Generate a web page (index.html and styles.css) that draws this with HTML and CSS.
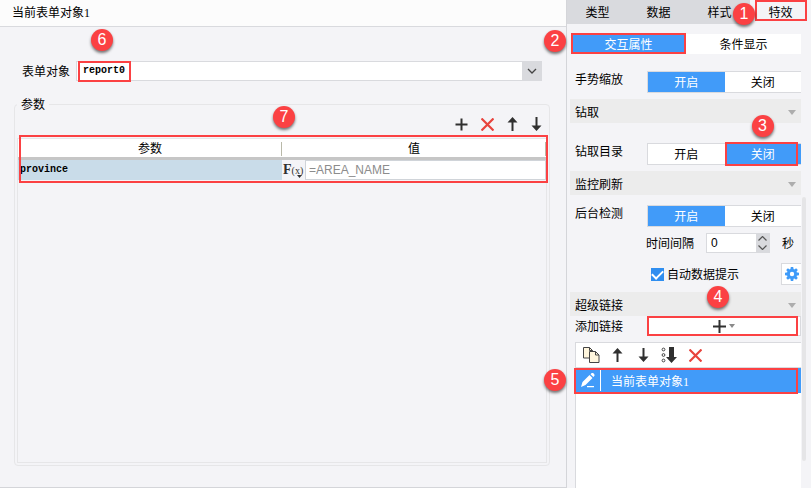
FILE: index.html
```html
<!DOCTYPE html>
<html lang="zh-CN">
<head>
<meta charset="utf-8">
<title>当前表单对象1</title>
<link rel="stylesheet" href="styles.css">
</head>
<body>
<main class="editor">
  <h1 class="title">当前表单对象<span class="num">1</span></h1>
  <div class="editor-body">
    <div class="form-row">
      <label for="target">表单对象</label>
      <div class="combo">
        <select id="target"><option>report0</option></select>
        <span class="combo-arrow"><svg width="10" height="6" viewBox="0 0 10 6"><path d="M1 1l4 4 4-4" fill="none" stroke="#444" stroke-width="1.3"/></svg></span>
        <span class="mark mark-target"><b class="badge badge-6">6</b></span>
      </div>
    </div>
    <fieldset class="params">
      <legend>参数</legend>
      <div class="toolbar">
        <button type="button" aria-label="添加"><svg width="13" height="13" viewBox="0 0 13 13"><path d="M6.5 .5v12M.5 6.5h12" stroke="#303030" stroke-width="2"/></svg></button>
        <button type="button" aria-label="删除"><svg width="13" height="13" viewBox="0 0 13 13"><path d="M.5 .5l12 12M12.500 .5l-12 12" stroke="#e8433c" stroke-width="2.200"/></svg></button>
        <button type="button" aria-label="上移"><svg width="11" height="14" viewBox="0 0 11 14"><path d="M5.500 0L10.500 5.500H6.500V14h-2V5.500H.5z" fill="#303030"/></svg></button>
        <button type="button" aria-label="下移"><svg width="11" height="14" viewBox="0 0 11 14"><path d="M5.500 14L10.500 8.500H6.500V0h-2v8.500H.5z" fill="#303030"/></svg></button>
      </div>
      <div class="grid-box">
        <table>
          <thead><tr><th>参数</th><th>值</th></tr></thead>
          <tbody><tr>
            <td class="name">province</td>
            <td><div class="value">
              <button type="button" class="fx" aria-label="公式"><span class="fx-f">F</span><span class="fx-x">(x)</span><svg width="5" height="3" viewBox="0 0 5 3"><path d="M0 0h5L2.500 3z" fill="#303030"/></svg></button>
              <input type="text" aria-label="值" value="=AREA_NAME">
            </div></td>
          </tr></tbody>
        </table>
        <span class="mark mark-table"><b class="badge badge-7">7</b></span>
      </div>
    </fieldset>
  </div>
</main>

<aside class="side">
  <nav class="tabs">
    <button type="button">类型</button>
    <button type="button">数据</button>
    <button type="button">样式</button>
    <button type="button" class="active">特效<span class="mark mark-tab"><b class="badge badge-1">1</b></span></button>
  </nav>
  <div class="panel">
    <div class="subtabs">
      <button type="button" class="on">交互属性<span class="mark mark-sub"><b class="badge badge-2">2</b></span></button>
      <button type="button">条件显示</button>
    </div>
    <div class="row">
      <span class="row-label">手势缩放</span>
      <div class="toggle"><button type="button" class="on">开启</button><button type="button">关闭</button></div>
    </div>
    <h2 class="section">钻取</h2>
    <div class="row row-drill">
      <span class="row-label">钻取目录</span>
      <div class="toggle"><button type="button">开启</button><button type="button" class="on">关闭<span class="mark mark-off"><b class="badge badge-3">3</b></span></button></div>
    </div>
    <h2 class="section">监控刷新</h2>
    <div class="row row-check">
      <span class="row-label">后台检测</span>
      <div class="toggle"><button type="button" class="on">开启</button><button type="button">关闭</button></div>
    </div>
    <div class="interval">
      <label for="secs">时间间隔</label>
      <div class="spinner">
        <input id="secs" type="text" inputmode="numeric" value="0">
        <div class="steps">
          <button type="button" aria-label="增加"><svg width="9" height="5" viewBox="0 0 9 5"><path d="M.5 4.500l4-4 4 4" fill="none" stroke="#555" stroke-width="1.200"/></svg></button>
          <button type="button" aria-label="减少"><svg width="9" height="5" viewBox="0 0 9 5"><path d="M.5 .5l4 4 4-4" fill="none" stroke="#555" stroke-width="1.200"/></svg></button>
        </div>
      </div>
      <span>秒</span>
    </div>
    <div class="tip">
      <input id="auto" type="checkbox" checked>
      <label for="auto">自动数据提示</label>
      <button type="button" class="gear" aria-label="设置"><svg width="14" height="14" viewBox="-7 -7 14 14"><g fill="#3e9bf9"><circle r="5"/><path id="tooth" d="M-1.700-4L-1.200-7h2.400L1.700-4V4L1.200 7h-2.400L-1.700 4z"/><use href="#tooth" transform="rotate(45)"/><use href="#tooth" transform="rotate(90)"/><use href="#tooth" transform="rotate(135)"/></g><circle r="2.200" fill="#fff"/></svg></button>
    </div>
    <h2 class="section">超级链接</h2>
    <div class="row row-link">
      <span class="row-label">添加链接</span>
      <button type="button" class="add" aria-label="添加链接">
        <svg width="13" height="13" viewBox="0 0 13 13"><path d="M6.500 0v13M0 6.500h13" stroke="#303030" stroke-width="2"/></svg>
        <svg width="6" height="4" viewBox="0 0 6 4"><path d="M0 0h6L3 4z" fill="#8a8a8a"/></svg>
        <span class="mark mark-add"><b class="badge badge-4">4</b></span>
      </button>
    </div>
    <div class="links">
      <div class="link-tools">
        <button type="button" aria-label="复制"><svg width="17" height="16" viewBox="0 0 17 16"><g fill="#fff6dd" stroke="#444"><path d="M.5 .5h6l3 3v7.500h-9z"/><path d="M6.500 .5v3h3" fill="none"/><path d="M6.500 4.500h6l3.500 3.500v7.500H6.500z"/><path d="M12.500 4.500V8H16" fill="none"/></g></svg></button>
        <button type="button" aria-label="上移"><svg width="11" height="14" viewBox="0 0 11 14"><path d="M5.500 0L10.500 5.500H6.500V14h-2V5.500H.5z" fill="#303030"/></svg></button>
        <button type="button" aria-label="下移"><svg width="11" height="14" viewBox="0 0 11 14"><path d="M5.500 14L10.500 8.500H6.500V0h-2v8.500H.5z" fill="#303030"/></svg></button>
        <button type="button" aria-label="排序"><svg width="16" height="16" viewBox="0 0 16 16"><g fill="none" stroke="#444"><circle cx="2.500" cy="2.500" r="1.400"/><circle cx="2.500" cy="8" r="1.400"/><circle cx="2.500" cy="13.500" r="1.400"/></g><path d="M8 0h5v10h3l-5.500 6L5 10h3z" fill="#303030"/></svg></button>
        <button type="button" aria-label="删除"><svg width="13" height="13" viewBox="0 0 13 13"><path d="M.5 .5l12 12M12.500 .5l-12 12" stroke="#e8433c" stroke-width="2.200"/></svg></button>
      </div>
      <div class="link-item">
        <button type="button" class="edit" aria-label="编辑"><svg width="14" height="15" viewBox="0 0 14 15"><path d="M0 14l1.500-5L8.500 2l3 3L4.500 12zM9.500 1.200L10.700 0q1-.4 2 .6t.8 2.200L12.400 4zM6 13h7v1.200H6z" fill="#fff"/></svg></button>
        <span class="link-name">当前表单对象<span class="num">1</span></span>
        <span class="mark mark-item"><b class="badge badge-5">5</b></span>
      </div>
    </div>
    <div class="scrollbar"></div>
  </div>
</aside>
</body>
</html>
```

FILE: styles.css
```css
* { box-sizing: border-box; }

body {
  margin: 0;
  display: flex;
  height: 100vh;
  overflow: hidden;
  background: #f4f4f7;
  color: #000;
  font: 12px/16px "Noto Sans CJK SC", sans-serif;
}

button, input, select {
  margin: 0;
  padding: 0;
  border: 0;
  border-radius: 0;
  background: none;
  color: inherit;
  font: inherit;
}

svg { display: block; flex: none; }

.num { font: 12px/12px "Liberation Serif", serif; }

/* Left editor */
.editor {
  flex: 1;
  min-width: 0;
  display: flex;
  flex-direction: column;
  border-right: 1px solid #d4d5d9;
  border-bottom: 1px solid #d4d5d9;
}

.title {
  margin: 0;
  padding: 4px 12px 6px;
  border-bottom: 1px solid #d9dade;
  background: #fcfcfc;
  font-size: 12px;
  font-weight: 400;
}

.editor-body {
  flex: 1;
  display: flex;
  flex-direction: column;
  padding: 34px 16px 21px 14px;
}

.form-row {
  display: flex;
  align-items: center;
  gap: 6px;
  padding: 0 8px;
}

.combo {
  position: relative;
  flex: 1;
  display: flex;
  height: 20px;
  border: 1px solid #d9dade;
  background: #fff;
}

.combo select {
  flex: 1;
  appearance: none;
  padding-left: 6px;
  font: bold 10px/18px "Liberation Mono", monospace;
}

.combo-arrow {
  display: grid;
  place-items: center;
  width: 19px;
  background: #d9dade;
}

.params {
  flex: 1;
  display: flex;
  flex-direction: column;
  min-width: 0;
  margin: 15px 0 0;
  padding: 0 2px 2px;
  border: 1px solid #e6e6e8;
  border-radius: 4px;
}

.params legend { padding: 0 4px; }

.toolbar {
  display: flex;
  justify-content: flex-end;
  align-items: center;
  gap: 13px;
  height: 26px;
  padding: 0 5px 2px 0;
}

.grid-box {
  position: relative;
  flex: 1;
  border: 1px solid #e6e6e8;
}

table {
  width: 100%;
  border-collapse: separate;
  border-spacing: 0;
  table-layout: fixed;
}

th {
  height: 21px;
  padding: 0;
  border-bottom: 3px solid #c6c6c6;
  background: linear-gradient(#b9b9a9, #b9b9a9) right 3px / 1px 14px no-repeat, #fff;
  font-weight: 400;
  line-height: 18px;
}

td { padding: 0; height: 20px; }

.name {
  padding-left: 2px;
  background: #c9dce9;
  font: bold 10px/18px "Liberation Mono", monospace;
}

.value { display: flex; height: 20px; }

.fx {
  position: relative;
  width: 23px;
  padding-left: 1px;
  font-family: "Liberation Serif", serif;
  text-align: left;
  line-height: 16px;
  white-space: nowrap;
  color: #303030;
}

.fx-f { font-size: 14px; font-weight: 700; }
.fx-x { font-size: 10px; }
.fx svg { position: absolute; right: 3px; bottom: 2px; }

.value input {
  flex: 1;
  min-width: 0;
  padding-left: 3px;
  border: 1px solid #d0d4d9;
  background: #fff;
  color: #8c8c8c;
  font: 12px "Liberation Sans", sans-serif;
}

/* Right property panel */
.side {
  flex: none;
  width: 244px;
  display: flex;
  flex-direction: column;
}

.tabs { display: flex; height: 24px; background: #d9dade; }
.tabs button { position: relative; flex: 1; }
.tabs .active { background: #f4f4f7; }

.panel {
  position: relative;
  flex: 1;
  display: flex;
  flex-direction: column;
  padding: 10px 10px 0 3px;
}

.subtabs {
  display: flex;
  height: 20px;
  margin: 0 0 17px 1px;
  background: #fff;
}

.subtabs button { position: relative; flex: 1; }

.on { background: #419bf9; color: #fff; }

.row {
  display: flex;
  align-items: flex-start;
  justify-content: space-between;
  height: 28px;
  padding-left: 5px;
}

.row-label { white-space: nowrap; }

.row-drill { height: 48px; padding-top: 20px; }
.row-check { height: 38px; padding-top: 10px; }
.row-link { height: 26px; }
.row-link .row-label { padding-top: 2px; }

.toggle {
  display: flex;
  width: 154px;
  height: 22px;
  border: 1px solid #d9dade;
  border-right: 0;
  background: #fff;
}

.toggle button { position: relative; flex: 1; }

.section {
  display: flex;
  align-items: center;
  justify-content: space-between;
  height: 24px;
  margin: 0;
  padding: 2px 5px 0;
  background: #ececec;
  font-size: 12px;
  font-weight: 400;
}

.section::after {
  content: "";
  border: 4px solid transparent;
  border-top: 5px solid #adadad;
  border-bottom: 0;
}

.interval {
  display: flex;
  align-items: center;
  gap: 12px;
  padding-left: 76px;
}

.spinner {
  display: flex;
  width: 64px;
  height: 20px;
  border: 1px solid #d9dade;
  background: #fff;
}

.spinner input {
  flex: 1;
  min-width: 0;
  padding-left: 4px;
  font-family: "Liberation Sans", sans-serif;
}

.steps {
  display: flex;
  flex-direction: column;
  width: 13px;
  background: #d9dade;
}

.steps button { flex: 1; display: grid; place-items: center; }

.tip {
  display: flex;
  align-items: center;
  gap: 3px;
  margin: 10px 0 7px;
  padding-left: 81px;
}

.tip input {
  appearance: none;
  width: 13px;
  height: 13px;
  background: #2f8ef0;
  display: grid;
  place-items: center;
}

.tip input::after {
  content: "";
  width: 5px;
  height: 9px;
  margin-bottom: 2px;
  border: solid #fff;
  border-width: 0 2px 2px 0;
  transform: rotate(45deg);
}

.tip input:not(:checked)::after { display: none; }

.gear {
  display: grid;
  place-items: center;
  width: 20px;
  height: 22px;
  margin-left: auto;
  border: 1px solid #d9dade;
  border-right: 0;
  background: #fff;
}

.add {
  position: relative;
  display: flex;
  align-items: center;
  justify-content: center;
  gap: 3px;
  width: 154px;
  height: 20px;
  border: 1px solid #d9dade;
  background: #fff;
}

.links {
  flex: 1;
  margin-left: 5px;
  border: 1px solid #d9dade;
  border-width: 1px 0 0 1px;
  background: #fff;
}

.link-tools {
  display: flex;
  align-items: center;
  gap: 15px;
  height: 25px;
  padding-left: 7px;
  border-bottom: 1px solid #d9dade;
}

.link-tools button:first-child { margin-right: -3px; }
.link-tools button:nth-child(4) { margin: 0 -3px; }

.link-item {
  position: relative;
  display: flex;
  align-items: center;
  height: 25px;
  background: #419bf9;
  color: #fff;
}

.edit { width: 25px; height: 21px; padding-left: 5px; border-right: 1px solid #fff; }
.link-name { padding-left: 10px; }

.scrollbar {
  position: absolute;
  top: 173px;
  right: 5px;
  bottom: 27px;
  width: 4px;
  border-radius: 2px;
  background: #e5e5e7;
}

/* Numbered callouts */
.mark { position: absolute; border: 2px solid #fb4143; pointer-events: none; z-index: 1; }

.mark-target { left: 1px; top: -1px; width: 53px; height: 21px; }
.mark-table { left: 1px; right: -2px; top: -4px; height: 48px; }
.mark-tab { left: 5px; right: 4px; top: 0; height: 21px; }
.mark-sub { inset: -1px 0 0; }
.mark-off { inset: -2px 3px -2px 0; }
.mark-add { inset: -1px 2px -1px -1px; }
.mark-item { inset: 0 3px -1px -2px; }

.badge {
  position: absolute;
  width: 22px;
  height: 22px;
  border-radius: 50%;
  background: #fb4143;
  box-shadow: 0 2px 3px #0008;
  color: #fff;
  font: 16px/22px "Liberation Sans", sans-serif;
  text-align: center;
}

.badge-1 { left: -24px; top: 1px; }
.badge-2 { left: -29px; top: -5px; }
.badge-3 { left: 25px; top: -29px; }
.badge-4 { left: 58px; top: -32px; }
.badge-5 { left: -32px; top: -1px; }
.badge-6 { left: 11px; top: -34px; }
.badge-7 { left: 48%; top: -31px; }
```
